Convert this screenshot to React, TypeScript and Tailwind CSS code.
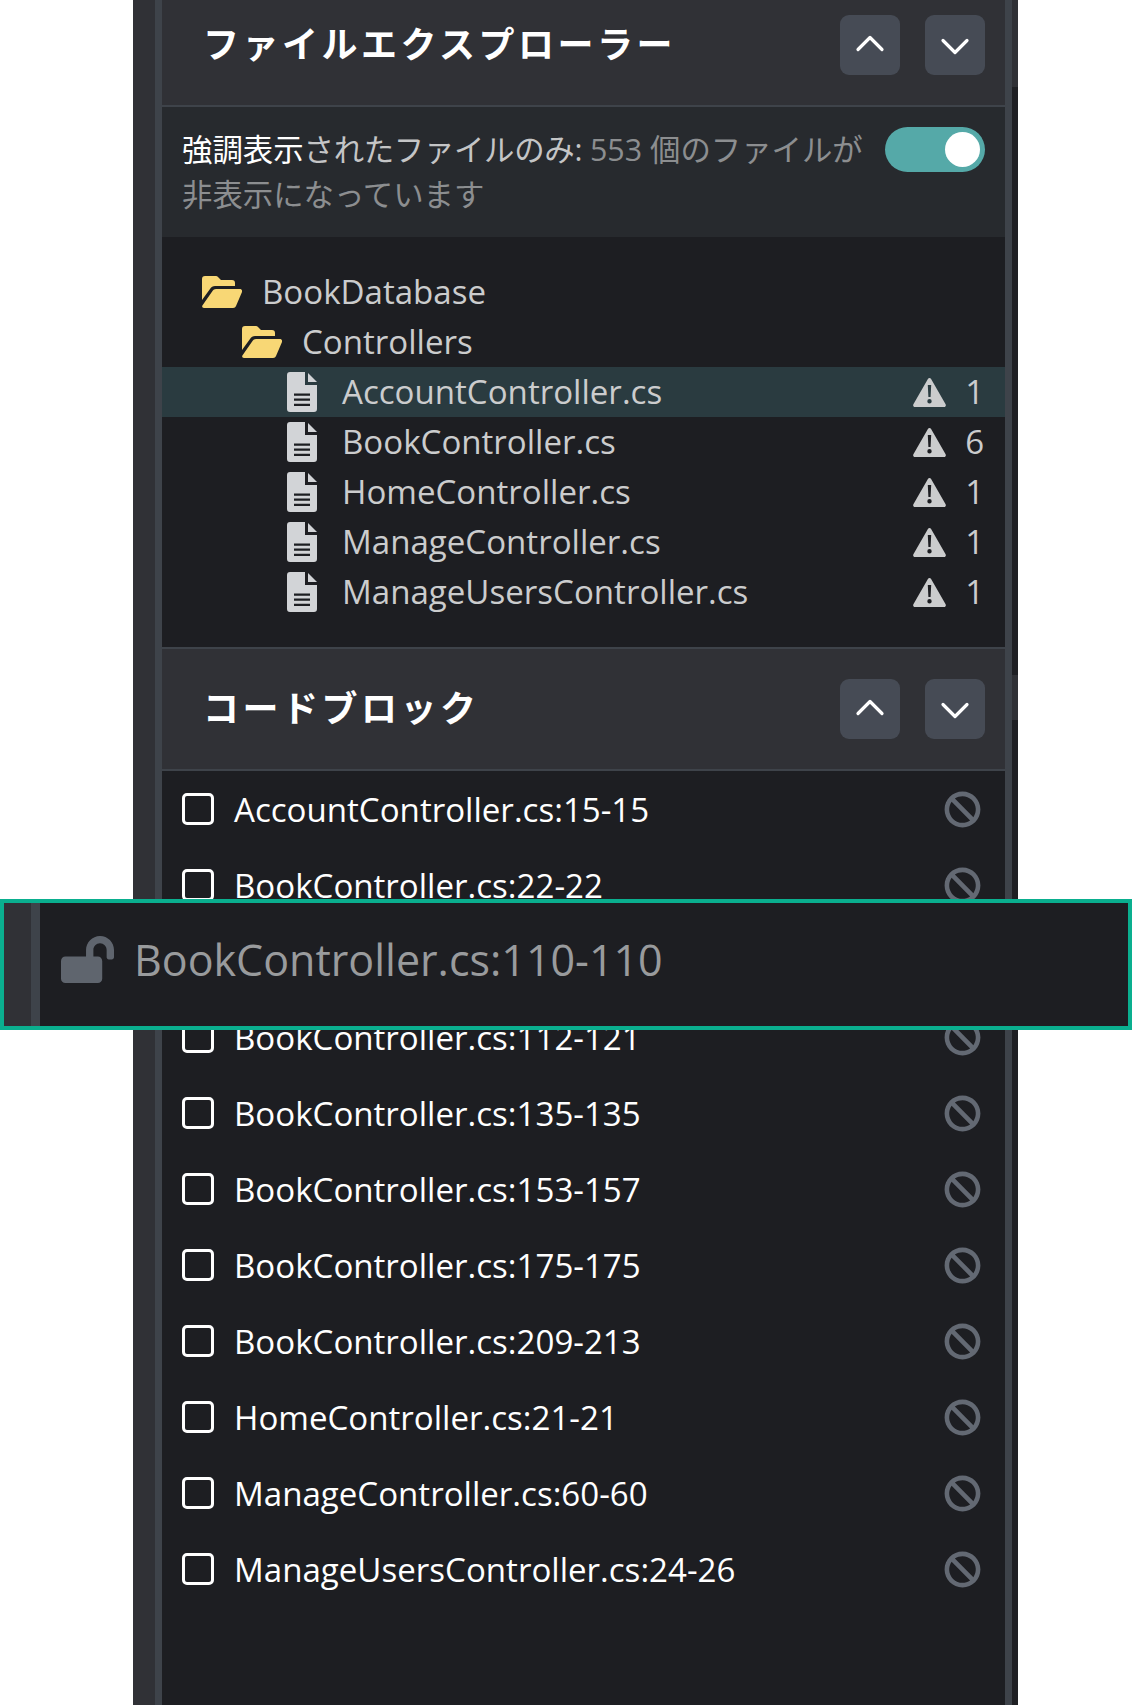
import { ChevronDown, ChevronUp } from 'lucide-react';
import { FaBan, FaLockOpen } from 'react-icons/fa';

const files = [
  { name: 'AccountController.cs', count: 1, selected: true },
  { name: 'BookController.cs', count: 6 },
  { name: 'HomeController.cs', count: 1 },
  { name: 'ManageController.cs', count: 1 },
  { name: 'ManageUsersController.cs', count: 1 },
];

const blocks = [
  'AccountController.cs:15-15',
  'BookController.cs:22-22',
  'BookController.cs:110-110',
  'BookController.cs:112-121',
  'BookController.cs:135-135',
  'BookController.cs:153-157',
  'BookController.cs:175-175',
  'BookController.cs:209-213',
  'HomeController.cs:21-21',
  'ManageController.cs:60-60',
  'ManageUsersController.cs:24-26',
];

function FolderIcon() {
  return (
    <svg width="40" height="32" viewBox="0 0 40 32" className="shrink-0 text-[#f8d775]" fill="currentColor">
      <path d="M3 0H14a3 3 0 0 1 2 1l3 3H30a3 3 0 0 1 3 3v3H13c-2 0-4 1-5 3L0 24V3a3 3 0 0 1 3-3Z" />
      <path d="M14 13H38c1.500 0 2.500 1.500 2 3L34 30c-.5 1.200-1.500 2-3 2H2c-1.500 0-2.300-1.300-1.600-2.600L10.500 15c.7-1.200 2-2 3.500-2Z" />
    </svg>
  );
}

function FileIcon() {
  return (
    <svg width="30" height="40" viewBox="0 0 30 40" className="shrink-0 text-[#d2d4d7]" fill="currentColor">
      <path d="M3 0H18V13H30V37a3 3 0 0 1-3 3H3a3 3 0 0 1-3-3V3a3 3 0 0 1 3-3Z" />
      <path d="M21 1 30 10H21Z" />
      <path d="M7 21.5H23V23.7H7ZM7 26.5H23V28.7H7ZM7 31.8H23V34H7Z" fill="#1d1e22" />
    </svg>
  );
}

function WarningIcon() {
  return (
    <svg width="33" height="29" viewBox="0 0 33 29" className="shrink-0 text-[#cbcccd]" fill="currentColor">
      <path
        fillRule="evenodd"
        d="M14.900 1 .4 26.200C-.3 27.500.5 29 2 29h29c1.500 0 2.300-1.500 1.600-2.800L18.100 1c-.7-1.300-2.500-1.300-3.200 0ZM14.800 7h3.400l-.6 12h-2.200ZM16.500 21a2.200 2.200 0 1 1 0 4.400 2.200 2.200 0 0 1 0-4.400Z"
      />
    </svg>
  );
}

function SectionHeader({ title }: { title: string }) {
  return (
    <div className="flex h-[122px] items-center justify-between border-b-2 border-[#3e434a] bg-[#303136] pl-[41px] pr-[20px]">
      <h2 className="text-[36px] font-bold tracking-[3.5px] text-white">{title}</h2>
      <div className="flex gap-[25px]">
        <button className="flex h-[60px] w-[60px] items-center justify-center rounded-[9px] bg-[#464b55] text-white">
          <ChevronUp size={48} strokeWidth={1.6} className="-translate-y-[1.5px]" />
        </button>
        <button className="flex h-[60px] w-[60px] items-center justify-center rounded-[9px] bg-[#464b55] text-white">
          <ChevronDown size={48} strokeWidth={1.6} className="translate-y-[1.5px]" />
        </button>
      </div>
    </div>
  );
}

function FileRow({ name, count, selected }: { name: string; count: number; selected?: boolean }) {
  return (
    <div className={`flex h-[50px] items-center pl-[125px] pr-[21px] ${selected ? 'bg-[#2a3b40]' : ''}`}>
      <FileIcon />
      <span className="ml-[25px] flex-1 text-[33.1px] text-[#cbcccd]">{name}</span>
      <WarningIcon />
      <span className="w-[38px] text-right text-[33px] text-[#cbcccd]">{count}</span>
    </div>
  );
}

function BlockRow({ label, hidden }: { label: string; hidden?: boolean }) {
  return (
    <div className={`flex h-[76px] items-center pl-[20px] pr-[24px] ${hidden ? 'invisible' : ''}`}>
      <div className="mb-[2px] h-[32px] w-[32px] shrink-0 rounded-[5px] border-[3.5px] border-white" />
      <span className="ml-[20px] flex-1 text-[33.1px] text-white">{label}</span>
      <FaBan size={37} className="mb-[2px] shrink-0 text-[#636973]" />
    </div>
  );
}

export default function App() {
  return (
    <div className="relative h-[1705px] w-[1132px] overflow-hidden bg-white font-['Open_Sans','Noto_Sans_CJK_JP',sans-serif]">
      <div className="ml-[133px] flex h-full w-[885px]">
        <div className="w-[22px] shrink-0 bg-[#303136]" />
        <div className="flex min-w-0 flex-1 flex-col border-x-[7px] border-[#3e434a] bg-[#1d1e22]">
          <div className="-mt-[15px]">
            <SectionHeader title="ファイルエクスプローラー" />
          </div>

          <div className="flex h-[130px] items-start justify-between bg-[#272a2e] pl-[20px] pr-[20px] pt-[20px]">
            <p className="w-[690px] text-[30.4px] leading-[45px] text-[#8c8e90]">
              <span className="text-white">強調表示</span>
              <span className="tracking-[-0.3px] text-[#c4c5c6]">されたファイルのみ:</span> 553 個のファイルが非表示になっています
            </p>
            <div className="flex h-[45px] w-[100px] items-center justify-end rounded-full bg-[#55a9a8] pr-[5px]">
              <div className="h-[35px] w-[35px] rounded-full bg-white" />
            </div>
          </div>

          <div className="border-b-2 border-[#3e434a] py-[30px]">
            <div className="flex h-[50px] items-center pl-[40px]">
              <FolderIcon />
              <span className="ml-[20px] text-[33.1px] text-[#cbcccd]">BookDatabase</span>
            </div>
            <div className="flex h-[50px] items-center pl-[80px]">
              <FolderIcon />
              <span className="ml-[20px] text-[33.1px] text-[#cbcccd]">Controllers</span>
            </div>
            {files.map((f) => (
              <FileRow key={f.name} {...f} />
            ))}
          </div>

          <SectionHeader title="コードブロック" />

          <div className="pt-[1px]">
            {blocks.map((b) => (
              <BlockRow key={b} label={b} hidden={b.endsWith(':110-110')} />
            ))}
          </div>
        </div>
        <div className="flex w-[6px] shrink-0 flex-col bg-[#1f2024]">
          <div className="h-[87px] bg-[#303136]" />
          <div className="mt-[588px] h-[45px] bg-[#303136]" />
        </div>
      </div>

      {/* Item being dragged, floats over the list */}
      <div className="absolute left-0 top-[899px] flex h-[131px] w-[1132px] border-4 border-[#0aaf8f] bg-[#1d1e22]">
        <div className="w-[27px] shrink-0 bg-[#303136]" />
        <div className="w-[9px] shrink-0 bg-[#3e434a]" />
        <div className="flex items-center pb-[9px] pl-[21px]">
          <FaLockOpen size={53} className="mb-[1px] shrink-0 text-[#5f656e]" />
          <span className="ml-[20px] text-[43px] text-[#999b9d]">BookController.cs:110-110</span>
        </div>
      </div>
    </div>
  );
}
